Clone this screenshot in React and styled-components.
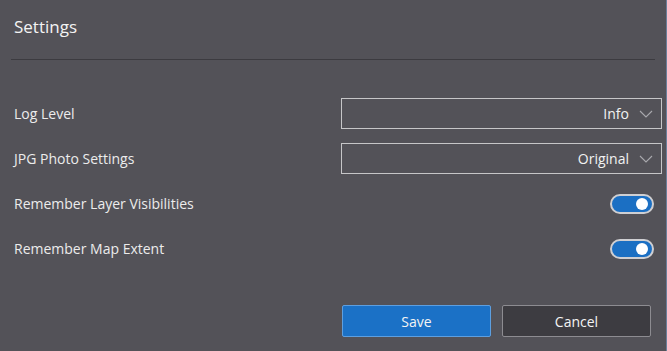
import React, { useState } from "react";
import styled, { createGlobalStyle } from "styled-components";

const GlobalStyle = createGlobalStyle`
  html, body {
    margin: 0;
    padding: 0;
    background: #535258;
  }
  body {
    font-family: "Open Sans", "Noto Sans", sans-serif;
  }
`;

function Chevron() {
  return (
    <svg width="14" height="8" viewBox="0 0 14 8" fill="none">
      <path d="M1 1l6 6 6-6" stroke="#a9a9ad" strokeWidth="1.1" />
    </svg>
  );
}

function App() {
  const [layers, setLayers] = useState(true);
  const [extent, setExtent] = useState(true);

  return (
    <StyledSettings>
      <GlobalStyle />
      <Header>Settings</Header>
      <Divider />
      <Form>
        <Row>
          <Label>Log Level</Label>
          <Select>
            <span>Info</span>
            <Chevron />
          </Select>
        </Row>
        <Row>
          <Label>JPG Photo Settings</Label>
          <Select>
            <span>Original</span>
            <Chevron />
          </Select>
        </Row>
        <Row>
          <Label>Remember Layer Visibilities</Label>
          <Toggle $on={layers} onClick={() => setLayers(!layers)}>
            <Knob $on={layers} />
          </Toggle>
        </Row>
        <Row>
          <Label>Remember Map Extent</Label>
          <Toggle $on={extent} onClick={() => setExtent(!extent)}>
            <Knob $on={extent} />
          </Toggle>
        </Row>
      </Form>
      <Footer>
        <Button $primary>Save</Button>
        <Button>Cancel</Button>
      </Footer>
    </StyledSettings>
  );
}
export default App;

const StyledSettings = styled.div`
  width: 667px;
  height: 351px;
  box-sizing: border-box;
  background: #535258;
  border-right: 1px solid #6a7f9a;
  color: #f2f2f2;
  display: flex;
  flex-direction: column;
  overflow: hidden;
`;

const Header = styled.header`
  height: 59px;
  box-sizing: border-box;
  padding: 15px 0 0 14px;
  font-size: 17px;
  color: #f4f4f4;
`;

const Divider = styled.div`
  height: 1px;
  margin: 0 11px 0 11px;
  background: #3c3b40;
`;

const Form = styled.main`
  display: flex;
  flex-direction: column;
  padding: 31px 4px 0 14px;
`;

const Row = styled.div`
  height: 45px;
  display: flex;
  align-items: center;
  justify-content: space-between;
`;

const Label = styled.span`
  font-size: 14px;
  color: #ececec;
`;

const Select = styled.div`
  width: 321px;
  height: 31px;
  box-sizing: border-box;
  border: 1px solid #c6c6c8;
  display: flex;
  align-items: center;
  justify-content: flex-end;
  gap: 10px;
  padding-right: 8px;
  font-size: 14px;
  color: #f2f2f2;
`;

const Toggle = styled.div`
  width: 44px;
  height: 20px;
  box-sizing: border-box;
  margin-right: 8px;
  border-radius: 10px;
  border: 2px solid #cfcfd2;
  background: ${(p) => (p.$on ? "#1b6fc3" : "transparent")};
  position: relative;
  cursor: pointer;
`;

const Knob = styled.div`
  position: absolute;
  top: 2px;
  left: ${(p) => (p.$on ? "24px" : "4px")};
  width: 12px;
  height: 12px;
  border-radius: 50%;
  background: #ffffff;
`;

const Footer = styled.footer`
  margin-top: auto;
  display: flex;
  justify-content: flex-end;
  gap: 11px;
  padding: 0 15px 14px 0;
`;

const Button = styled.button`
  width: 149px;
  height: 32px;
  box-sizing: border-box;
  border-radius: 2px;
  font-family: "Open Sans", "Noto Sans", sans-serif;
  font-size: 14px;
  color: #f4f4f4;
  cursor: pointer;
  background: ${(p) => (p.$primary ? "#1b71c6" : "#3d3c41")};
  border: 1px solid ${(p) => (p.$primary ? "#5d9fe0" : "#8d8c91")};
`;
